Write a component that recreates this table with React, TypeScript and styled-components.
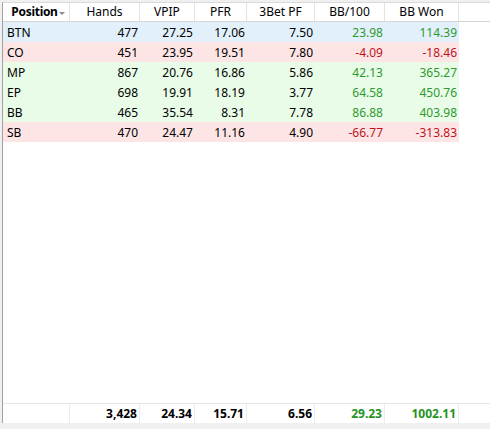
import React from "react";
import styled, { createGlobalStyle } from "styled-components";

const Global = createGlobalStyle`
  html, body { margin: 0; padding: 0; background: #ffffff; }
  body { font-family: "Noto Sans", "Open Sans", sans-serif; }
`;

const COLS = "67px 70px 55px 52px 68px 70px 74px 1fr";

const Page = styled.div`
  width: 490px;
  height: 429px;
  display: flex;
  flex-direction: column;
  background: #f0f0f0;
  overflow: hidden;
`;

const Panel = styled.div`
  flex: 1;
  display: flex;
  flex-direction: column;
  margin: 2px 0 0 2px;
  border-left: 1px solid #a0a0a0;
  border-top: 1px solid #d9d9d9;
  background: #ffffff;
  font-size: 12px;
  color: #000;
`;

const HeaderRow = styled.div`
  display: grid;
  grid-template-columns: ${COLS};
  height: 19px;
  box-sizing: border-box;
  border-bottom: 1px solid #d5d5d5;
`;

const HeadCell = styled.div<{ $bold?: boolean; $last?: boolean }>`
  display: flex;
  align-items: center;
  justify-content: center;
  box-sizing: border-box;
  padding-left: ${(p) => (p.$bold ? "4px" : "0")};
  border-right: ${(p) => (p.$last ? "none" : "1px solid #e3e3e3")};
  font-weight: ${(p) => (p.$bold ? 700 : 400)};
  letter-spacing: ${(p) => (p.$bold ? "-0.3px" : "0")};
  line-height: 18px;
  white-space: nowrap;
`;

const SortArrow = styled.span`
  display: inline-block;
  width: 0;
  height: 0;
  margin-left: 1px;
  margin-top: 2px;
  border-left: 3px solid transparent;
  border-right: 3px solid transparent;
  border-top: 3px solid #8a8a8a;
`;

const Row = styled.div<{ $bg: string }>`
  display: grid;
  grid-template-columns: ${COLS};
  height: 20px;
  & > div:not(:last-child) {
    background: ${(p) => p.$bg};
  }
`;

const Cell = styled.div<{ $tone?: "pos" | "neg"; $left?: boolean }>`
  display: flex;
  align-items: center;
  justify-content: ${(p) => (p.$left ? "flex-start" : "flex-end")};
  padding: ${(p) => (p.$left ? "0 0 0 4px" : "0 2px 0 0")};
  box-sizing: border-box;
  white-space: nowrap;
  color: ${(p) =>
    p.$tone === "pos" ? "#2f9a2f" : p.$tone === "neg" ? "#c0141c" : "#000"};
`;

const Spacer = styled.div`
  flex: 1;
`;

const FooterRow = styled.div`
  display: grid;
  grid-template-columns: ${COLS};
  height: 20px;
  box-sizing: border-box;
  border-top: 1px solid #e6e6e6;
`;

const FootCell = styled.div<{ $tone?: "pos"; $last?: boolean }>`
  display: flex;
  align-items: center;
  justify-content: flex-end;
  padding-right: 2px;
  box-sizing: border-box;
  border-right: ${(p) => (p.$last ? "none" : "1px solid #ececec")};
  font-weight: 700;
  color: ${(p) => (p.$tone === "pos" ? "#239323" : "#000")};
`;

const BottomStrip = styled.div`
  height: 6px;
  background: #f0f0f0;
`;

type R = {
  pos: string;
  hands: string;
  vpip: string;
  pfr: string;
  tb: string;
  bb100: string;
  won: string;
  bg: string;
};

const BLUE = "#e1f0fb";
const RED = "#fde5e5";
const GREEN = "#e8fce8";

const rows: R[] = [
  { pos: "BTN", hands: "477", vpip: "27.25", pfr: "17.06", tb: "7.50", bb100: "23.98", won: "114.39", bg: BLUE },
  { pos: "CO", hands: "451", vpip: "23.95", pfr: "19.51", tb: "7.80", bb100: "-4.09", won: "-18.46", bg: RED },
  { pos: "MP", hands: "867", vpip: "20.76", pfr: "16.86", tb: "5.86", bb100: "42.13", won: "365.27", bg: GREEN },
  { pos: "EP", hands: "698", vpip: "19.91", pfr: "18.19", tb: "3.77", bb100: "64.58", won: "450.76", bg: GREEN },
  { pos: "BB", hands: "465", vpip: "35.54", pfr: "8.31", tb: "7.78", bb100: "86.88", won: "403.98", bg: GREEN },
  { pos: "SB", hands: "470", vpip: "24.47", pfr: "11.16", tb: "4.90", bb100: "-66.77", won: "-313.83", bg: RED },
];

const tone = (v: string) => (v.startsWith("-") ? "neg" : "pos") as "neg" | "pos";

export default function App() {
  return (
    <Page>
      <Global />
      <Panel>
        <HeaderRow>
          <HeadCell $bold>
            Position
            <SortArrow />
          </HeadCell>
          <HeadCell>Hands</HeadCell>
          <HeadCell>VPIP</HeadCell>
          <HeadCell>PFR</HeadCell>
          <HeadCell>3Bet PF</HeadCell>
          <HeadCell>BB/100</HeadCell>
          <HeadCell>BB Won</HeadCell>
          <HeadCell $last />
        </HeaderRow>
        {rows.map((r) => (
          <Row key={r.pos} $bg={r.bg}>
            <Cell $left>{r.pos}</Cell>
            <Cell>{r.hands}</Cell>
            <Cell>{r.vpip}</Cell>
            <Cell>{r.pfr}</Cell>
            <Cell>{r.tb}</Cell>
            <Cell $tone={tone(r.bb100)}>{r.bb100}</Cell>
            <Cell $tone={tone(r.won)}>{r.won}</Cell>
            <div />
          </Row>
        ))}
        <Spacer />
        <FooterRow>
          <FootCell />
          <FootCell>3,428</FootCell>
          <FootCell>24.34</FootCell>
          <FootCell>15.71</FootCell>
          <FootCell>6.56</FootCell>
          <FootCell $tone="pos">29.23</FootCell>
          <FootCell $tone="pos">1002.11</FootCell>
          <FootCell $last />
        </FooterRow>
      </Panel>
      <BottomStrip />
    </Page>
  );
}
